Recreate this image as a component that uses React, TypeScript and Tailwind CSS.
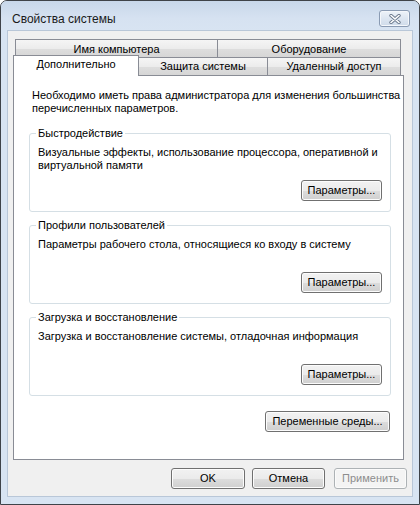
import React from "react";

const FONT = { fontFamily: '"Liberation Sans", Arial, sans-serif' };

function Button({
  children,
  className = "",
  disabled = false,
}: {
  children: React.ReactNode;
  className?: string;
  disabled?: boolean;
}) {
  return (
    <button
      type="button"
      disabled={disabled}
      className={
        "h-[21px] rounded-[3px] border text-[11px] leading-[13px] flex items-center justify-center " +
        (disabled
          ? "border-[#adb2b5] bg-[#f4f4f4] text-[#8d8d8d] shadow-[inset_0_0_0_1px_#fbfbfb] "
          : "border-[#707070] bg-[linear-gradient(#f2f2f2_0%,#ebebeb_50%,#dddddd_51%,#cfcfcf_100%)] text-black shadow-[inset_0_0_0_1px_#fcfcfc] ") +
        className
      }
    >
      {children}
    </button>
  );
}

function GroupBox({
  legend,
  lines,
}: {
  legend: string;
  lines: string[];
}) {
  return (
    <div className="relative w-[362px] h-[79px] border border-[#d5dfe5] rounded-[3px] flex flex-col pl-[8px] pr-[8px] pt-[12px] pb-[10px]">
      <span className="absolute left-[6px] top-[-7px] bg-white px-[2px] text-[11px] leading-[13px] text-black">
        {legend}
      </span>
      <div className="text-[11px] leading-[13px] text-black">
        {lines.map((l, i) => (
          <div key={i}>{l}</div>
        ))}
      </div>
      <div className="mt-auto flex justify-end">
        <Button className="w-[81px]">Параметры...</Button>
      </div>
    </div>
  );
}

function Tab({
  label,
  className = "",
  selected = false,
}: {
  label: string;
  className?: string;
  selected?: boolean;
}) {
  return (
    <div
      className={
        "border-t border-l border-r border-[#898c95] flex justify-center text-[11px] leading-[13px] text-black whitespace-nowrap " +
        (selected
          ? "bg-white h-[21px] mb-[-1px] relative z-10 pt-[2px] "
          : "bg-[linear-gradient(#f5f5f5_0%,#ececec_50%,#dedede_51%,#d6d6d6_100%)] h-[18px] ") +
        className
      }
    >
      {label}
    </div>
  );
}

export default function App() {
  return (
    <div
      className="w-[420px] h-[505px] bg-[#d8e4f2] border border-[#3f4349] rounded-t-[7px] flex flex-col overflow-hidden"
      style={FONT}
    >
      {/* Title bar */}
      <div className="h-[29px] flex items-start justify-between pl-[11px] pr-[9px] bg-[linear-gradient(#c8d7ea_0%,#d6e2f1_60%,#d8e4f2_100%)]">
        <span className="text-[12px] leading-[15px] text-[#1a1a1a] mt-[11px]">Свойства системы</span>
        <div className="mt-[9px] w-[31px] h-[17px] rounded-[3px] border border-[#8a9bb3] bg-[linear-gradient(#eef3f9_0%,#dde6f1_50%,#cfdbea_100%)] shadow-[inset_0_0_0_1px_#f4f7fb] flex items-center justify-center">
          <svg width="12" height="10" viewBox="0 0 12 10">
            <path d="M2 1.5 L10 8.5 M10 1.5 L2 8.5" stroke="#6c7a8e" strokeWidth="3.4" strokeLinecap="round" fill="none" />
            <path d="M2 1.5 L10 8.5 M10 1.5 L2 8.5" stroke="#ffffff" strokeWidth="1.6" strokeLinecap="round" fill="none" />
          </svg>
        </div>
      </div>

      {/* Client area */}
      <div className="flex-1 mx-[6px] mb-[7px] bg-[#f0f0f0] border border-[#b9c7d8] flex flex-col pt-[8px] pb-[7px]">
        {/* Tabs */}
        <div className="ml-[5px] w-[391px]">
          <div className="flex pl-[2px]">
            <Tab label="Имя компьютера" className="w-[203px] pt-[3px]" />
            <Tab label="Оборудование" className="w-[184px] -ml-px pt-[3px]" />
          </div>
          <div className="flex items-end h-[20px] -mt-[2px]">
            <Tab label="Дополнительно" selected className="w-[126px]" />
            <Tab label="Защита системы" className="w-[130px] -ml-px pt-[2px]" />
            <Tab label="Удаленный доступ" className="w-[134px] -ml-px pt-[2px]" />
          </div>

          {/* Panel */}
          <div className="relative z-0 h-[385px] bg-white border border-[#898c95] flex flex-col pl-[15px] pt-[13px]">
            <div className="pl-[3px] text-[11px] leading-[13px] text-black">
              <div>Необходимо иметь права администратора для изменения большинства</div>
              <div>перечисленных параметров.</div>
            </div>
            <div className="mt-[18px] flex flex-col gap-[13px]">
              <GroupBox
                legend="Быстродействие"
                lines={[
                  "Визуальные эффекты, использование процессора, оперативной и",
                  "виртуальной памяти",
                ]}
              />
              <GroupBox
                legend="Профили пользователей"
                lines={["Параметры рабочего стола, относящиеся ко входу в систему"]}
              />
              <GroupBox
                legend="Загрузка и восстановление"
                lines={["Загрузка и восстановление системы, отладочная информация"]}
              />
            </div>
            <div className="w-[362px] flex justify-end mt-[15px]">
              <Button className="w-[125px] mr-px">Переменные среды...</Button>
            </div>
          </div>
        </div>

        {/* Bottom buttons */}
        <div className="mt-auto flex justify-end pr-[5px]">
          <Button className="w-[74px] mr-[7px]">OK</Button>
          <Button className="w-[73px] mr-[9px]">Отмена</Button>
          <Button className="w-[73px]" disabled>
            Применить
          </Button>
        </div>
      </div>
    </div>
  );
}
